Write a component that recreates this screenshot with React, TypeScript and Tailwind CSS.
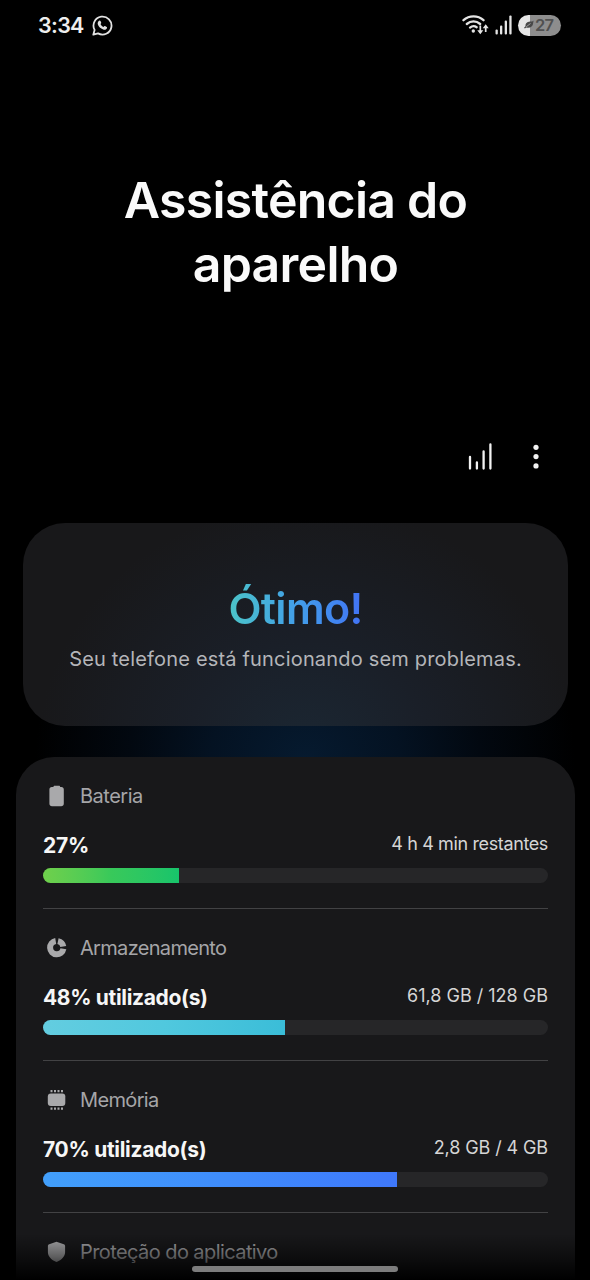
import type { ReactNode } from 'react';

type UsageItem = {
    icon: ReactNode;
    label: string;
    labelClass: string;
    value: string;
    valueClass: string;
    detail: string;
    detailClass: string;
    percent: number;
    fillClass: string;
};

const ITEMS: UsageItem[] = [
    {
        icon: <BatteryIcon />,
        label: 'Bateria',
        labelClass: 'tracking-[-0.5px]',
        value: '27%',
        valueClass: 'tracking-[-0.2px]',
        detail: '4 h 4 min restantes',
        detailClass: 'tracking-[-0.37px]',
        percent: 27,
        fillClass: 'from-[#6fd04b] via-[#38c95a] to-[#17c46b]',
    },
    {
        icon: <StorageIcon />,
        label: 'Armazenamento',
        labelClass: 'tracking-[-0.68px]',
        value: '48% utilizado(s)',
        valueClass: 'tracking-[-0.33px]',
        detail: '61,8 GB / 128 GB',
        detailClass: 'tracking-normal',
        percent: 48,
        fillClass: 'from-[#63cde0] via-[#50c8de] to-[#3abdd8]',
    },
    {
        icon: <MemoryIcon />,
        label: 'Memória',
        labelClass: 'tracking-[-0.65px]',
        value: '70% utilizado(s)',
        valueClass: 'tracking-[-0.3px]',
        detail: '2,8 GB / 4 GB',
        detailClass: 'tracking-[-0.1px]',
        percent: 70,
        fillClass: 'from-[#429ffb] via-[#3f8dfc] to-[#3f78fb]',
    },
];

export default function App() {
    return (
        <div className="relative flex h-[1280px] w-[590px] flex-col overflow-hidden bg-black font-['Inter','Liberation_Sans',sans-serif] text-white">
            <StatusBar />
            <h1 className="mt-[118px] pl-px text-center text-[50px] leading-16 font-semibold tracking-[-0.75px] text-[#fafafa]">
                Assistência do
                <br />
                aparelho
            </h1>
            <Toolbar />
            <main className="flex flex-1 flex-col bg-[radial-gradient(ellipse_270px_240px_at_305px_262px,#061a2f_0%,#041222_35%,#020810_65%,#000_100%)] pt-[26px]">
                <StatusCard />
                <section className="mr-[15px] ml-4 mt-[31px] flex-1 rounded-t-[38px] bg-[#18181a] pr-[27px] pl-[27px]">
                    {ITEMS.map(item => (
                        <UsageRow key={item.label} item={item} />
                    ))}
                    <div className="pt-[27px]">
                        <RowHeader icon={<ShieldIcon />} label="Proteção do aplicativo" labelClass="tracking-[-0.58px]" />
                    </div>
                </section>
            </main>
            <div className="absolute inset-x-0 bottom-0 flex h-[46px] items-end justify-center bg-linear-to-b from-transparent via-black/45 to-black pb-2">
                <div className="h-1.5 w-[206px] rounded-full bg-[#7d7d7d]" />
            </div>
        </div>
    );
}

function StatusBar() {
    return (
        <header className="flex h-[50px] items-center pr-[29px] pl-[38px]">
            <span className="w-[46px] text-[21.500px] leading-6 font-semibold tracking-[-0.7px] text-[#eeeeee]">3:34</span>
            <WhatsappIcon />
            <div className="ml-auto flex items-center">
                <WifiIcon />
                <svg width="18" height="20" viewBox="0 0 18 20" className="ml-1.5" fill="#e4e4e4">
                    <rect x="0.5" y="14.5" width="2.3" height="5" rx="1" />
                    <rect x="5" y="10.5" width="2.3" height="9" rx="1" />
                    <rect x="9.7" y="5.5" width="2.3" height="14" rx="1" />
                    <rect x="14.3" y="0.5" width="2.3" height="19" rx="1" />
                </svg>
                <div className="ml-[5px] flex h-[21px] w-[43px] items-center rounded-full bg-linear-to-r from-[#e6e6e6] from-27% to-[#8d8d8d] to-27% pl-[6px] text-[#505050]">
                    <svg width="10" height="10" viewBox="0 0 10 10" fill="#484848">
                        <path d="M9.6.5C8.700 1.700 7 1.300 4.800 1.800 2.600 2.300 1.200 4 1.500 6.200L0 7.800l.9.800 1.300-1.200c3.400 1.300 6.700-.7 6.900-4.200z" />
                        <path d="M2.200 6.800 6.500 3.500" stroke="#b5b5b5" strokeWidth="0.800" />
                    </svg>
                    <span className="ml-px text-[16.500px] leading-5 font-semibold tracking-[-0.7px]">27</span>
                </div>
            </div>
        </header>
    );
}

function Toolbar() {
    return (
        <div className="mt-[146px] flex h-[55px] justify-end pr-[50px]">
            <svg width="26" height="28" viewBox="0 0 26 28" fill="none" stroke="#f2f2f2" strokeWidth="2.300" strokeLinecap="round">
                <path d="M2 15v11.500M8.900 20.500v6M15.600 9.400v17.100M22.400 2.500v24" />
            </svg>
            <svg width="8" height="28" viewBox="0 0 8 28" className="ml-[38px]" fill="#f2f2f2">
                <circle cx="4" cy="5.300" r="2.600" />
                <circle cx="4" cy="14.600" r="2.600" />
                <circle cx="4" cy="23.900" r="2.600" />
            </svg>
        </div>
    );
}

function StatusCard() {
    return (
        <section className="mr-[22px] ml-[23px] flex h-[203px] flex-col items-center rounded-[42px] bg-[#18181a] bg-[radial-gradient(ellipse_270px_250px_at_285px_230px,#1b2733_0%,#1a1f28_45%,#18181a_100%)] pt-[58px]">
            <p className="bg-linear-to-r from-[#4cc3c8] via-[#439fe8] to-[#4272f5] bg-clip-text text-[43px] leading-[54px] font-semibold tracking-[-0.7px] text-transparent">
                Ótimo!
            </p>
            <p className="mt-2.5 text-[20px] leading-7 tracking-[0.18px] text-[#b4b5b9]">
                Seu telefone está funcionando sem problemas.
            </p>
        </section>
    );
}

function RowHeader({ icon, label, labelClass }: { icon: ReactNode; label: string; labelClass: string }) {
    return (
        <div className="flex h-6 items-center">
            <span className="flex w-[37px] pl-[3px]">{icon}</span>
            <span className={`text-[20px] leading-6 whitespace-nowrap text-[#a5a5a8] ${labelClass}`}>{label}</span>
        </div>
    );
}

function UsageRow({ item }: { item: UsageItem }) {
    return (
        <div className="h-[152px] border-b border-[#424244] pt-[27px]">
            <RowHeader icon={item.icon} label={item.label} labelClass={item.labelClass} />
            <div className="mt-6 flex h-[26px] justify-between">
                <span className={`text-[21px] leading-7 font-bold text-[#f6f6f6] ${item.valueClass}`}>{item.value}</span>
                <span className={`text-[18px] leading-[23px] text-[#d5d5d5] ${item.detailClass}`}>{item.detail}</span>
            </div>
            <div className="mt-2.5 h-[15px] overflow-hidden rounded-full bg-[#262628]">
                <div className={`h-full bg-linear-to-r ${item.fillClass}`} style={{ width: `${item.percent}%` }} />
            </div>
        </div>
    );
}

function WhatsappIcon() {
    return (
        <svg width="21" height="21" viewBox="0 0 21 21" className="ml-2" fill="none">
            <path
                d="M1.300 19.700l1.300-4.800A9 9 0 1 1 6 18.400z"
                stroke="#e2e2e2"
                strokeWidth="1.800"
                strokeLinejoin="round"
            />
            <path
                d="M7.200 5.700c.5-.4 1-.3 1.300.3l.7 1.600c.2.500-.1.900-.7 1.500.6 1.300 1.600 2.300 3 2.900.7-.8 1-1.100 1.500-.9l1.700.9c.5.300.4.900.1 1.400-.7 1.200-2.200 1.500-3.600 1-2.700-.9-4.600-2.800-5.400-5.200-.4-1.400.3-2.900 1.400-3.500z"
                fill="#e2e2e2"
            />
        </svg>
    );
}

function WifiIcon() {
    return (
        <svg width="27" height="20" viewBox="0 0 27 20" fill="none" stroke="#e4e4e4">
            <path d="M1.500 5.200C7.300.2 15.700.2 21.500 5.200" strokeWidth="2.300" strokeLinecap="round" />
            <path d="M4.800 9c4-3.400 9.400-3.400 13.400 0" strokeWidth="2.300" strokeLinecap="round" />
            <path d="M8 12.600c2.100-1.800 4.600-1.900 6.700-.4" strokeWidth="2.300" strokeLinecap="round" />
            <circle cx="11.300" cy="16" r="1.700" fill="#e4e4e4" stroke="none" />
            <path d="M18.300 10.500v7M23.700 17v-6" strokeWidth="1.700" />
            <path d="M15.300 15.200h6l-3 4zM20.700 13.300h6l-3-4z" fill="#e4e4e4" stroke="none" />
        </svg>
    );
}

function BatteryIcon() {
    return (
        <svg width="21" height="22" viewBox="0 0 21 22" fill="#a9a9ab">
            <path d="M8.700.8h4.200c.8 0 1.200.5 1.300 1.300h1.200c1.500 0 2.400 1 2.400 2.400v14c0 1.700-1 2.700-2.600 2.700H6c-1.600 0-2.600-1-2.600-2.700v-14c0-1.400.9-2.400 2.400-2.400h1.600C7.500 1.300 7.900.8 8.700.8z" />
        </svg>
    );
}

function StorageIcon() {
    return (
        <svg width="21" height="22" viewBox="0 0 21 22" fill="none" stroke="#a9a9ab" strokeWidth="6">
            <path d="M9.700 4A6.700 6.700 0 1 0 17.400 11.800" />
            <path d="M12 4.100a6.700 6.700 0 0 1 5.300 5.500" />
        </svg>
    );
}

function MemoryIcon() {
    return (
        <svg width="21" height="22" viewBox="0 0 21 22" fill="#a9a9ab">
            <rect x="1.800" y="4.600" width="17.500" height="12.500" rx="3" />
            <path d="M4.500 1h2v2.200h-2zM8 1h2v2.200H8zM11.500 1h2v2.200h-2zM15 1h2v2.200h-2zM4.500 18.500h2v2.200h-2zM8 18.500h2v2.200H8zM11.500 18.500h2v2.200h-2zM15 18.500h2v2.200h-2z" />
        </svg>
    );
}

function ShieldIcon() {
    return (
        <svg width="21" height="22" viewBox="0 0 21 22" fill="#a9a9ab">
            <path d="M10.500.8 17.800 3.200c.9.300 1.300.9 1.300 1.800v6.300c0 4.200-3.600 7.500-7.400 9.300-.8.400-1.600.4-2.400 0-3.800-1.800-7.400-5.100-7.400-9.300V5c0-.9.4-1.500 1.300-1.800z" />
        </svg>
    );
}
